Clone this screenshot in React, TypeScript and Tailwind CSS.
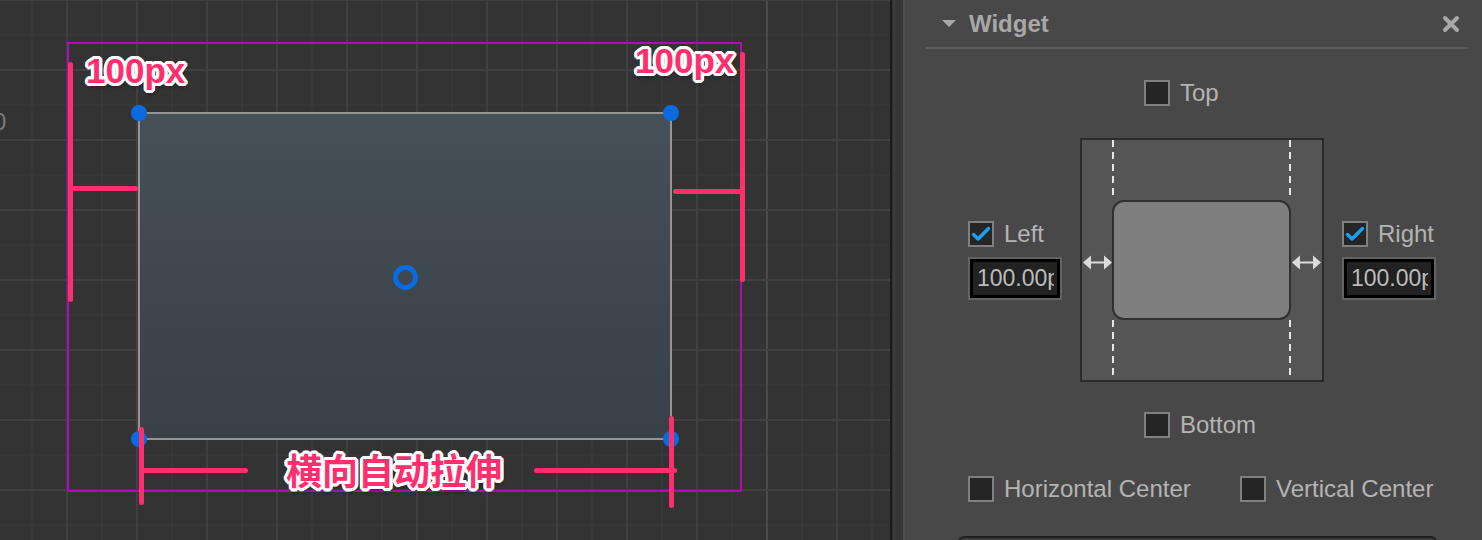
import React from 'react';

const OUTLINE =
  '[text-shadow:3px_0_0_#fff,-3px_0_0_#fff,0_3px_0_#fff,0_-3px_0_#fff,2px_2px_0_#fff,-2px_2px_0_#fff,2px_-2px_0_#fff,-2px_-2px_0_#fff,3px_1px_0_#fff,-3px_1px_0_#fff,3px_-1px_0_#fff,-3px_-1px_0_#fff,1px_3px_0_#fff,-1px_3px_0_#fff,1px_-3px_0_#fff,-1px_-3px_0_#fff,1px_4px_5px_rgba(0,0,0,0.45)]';

function Grid() {
  const majorX = Array.from({ length: 13 }, (_, i) => -3 + 70 * i);
  const minorX = Array.from({ length: 13 }, (_, i) => 32 + 70 * i);
  const majorY = Array.from({ length: 8 }, (_, i) => 70 * i);
  const minorY = Array.from({ length: 8 }, (_, i) => 35 + 70 * i);
  return (
    <svg className="absolute inset-0" width="890" height="540">
      {minorX.map((x) => (
        <line key={'mx' + x} x1={x} y1="0" x2={x} y2="540" stroke="#373737" strokeWidth="2" />
      ))}
      {minorY.map((y) => (
        <line key={'my' + y} x1="0" y1={y} x2="890" y2={y} stroke="#373737" strokeWidth="2" />
      ))}
      {majorX.map((x) => (
        <line key={'Mx' + x} x1={x} y1="0" x2={x} y2="540" stroke={x === 767 ? '#4a4a4a' : '#404040'} strokeWidth="2" />
      ))}
      {majorY.map((y) => (
        <line key={'My' + y} x1="0" y1={y} x2="890" y2={y} stroke="#404040" strokeWidth="2" />
      ))}
    </svg>
  );
}

function Canvas() {
  return (
    <div className="relative w-[890px] h-full shrink-0 overflow-hidden bg-[#333333]">
      <Grid />
      <div className="absolute left-[-7px] top-[110px] text-[24px] leading-none text-[#7a7a7a]">0</div>

      {/* parent bounds */}
      <div className="absolute left-[67px] top-[42px] w-[675px] h-[450px] border-2 border-[#aa10aa]" />

      {/* node */}
      <div className="absolute left-[138px] top-[112px] w-[534px] h-[328px] border-2 border-[#959595] bg-gradient-to-b from-[#465057] to-[#394047]" />
      <div className="absolute left-[131px] top-[105px] w-[16px] h-[16px] rounded-full bg-[#0a6be0]" />
      <div className="absolute left-[663px] top-[105px] w-[16px] h-[16px] rounded-full bg-[#0a6be0]" />
      <div className="absolute left-[131px] top-[431px] w-[16px] h-[16px] rounded-full bg-[#0a6be0]" />
      <div className="absolute left-[663px] top-[431px] w-[16px] h-[16px] rounded-full bg-[#0a6be0]" />
      <div className="absolute left-[393px] top-[265px] w-[25px] h-[25px] rounded-full border-[5px] border-[#0a6be0]" />

      {/* annotations */}
      <div className="absolute left-[68px] top-[62px] w-[5px] h-[240px] rounded-full bg-[#ff2f6e]" />
      <div className="absolute left-[68px] top-[186px] w-[70px] h-[5px] rounded-full bg-[#ff2f6e]" />
      <div className="absolute left-[740px] top-[52px] w-[5px] h-[230px] rounded-full bg-[#ff2f6e]" />
      <div className="absolute left-[673px] top-[189px] w-[72px] h-[5px] rounded-full bg-[#ff2f6e]" />
      <div className="absolute left-[139px] top-[427px] w-[5px] h-[78px] rounded-full bg-[#ff2f6e]" />
      <div className="absolute left-[139px] top-[468px] w-[109px] h-[5px] rounded-full bg-[#ff2f6e]" />
      <div className="absolute left-[669px] top-[416px] w-[5px] h-[92px] rounded-full bg-[#ff2f6e]" />
      <div className="absolute left-[534px] top-[468px] w-[143px] h-[5px] rounded-full bg-[#ff2f6e]" />

      <div className={`absolute left-[86px] top-[53px] text-[35px] font-bold leading-none text-[#ff2f6e] ${OUTLINE}`}>100px</div>
      <div className={`absolute left-[635px] top-[43px] text-[35px] font-bold leading-none text-[#ff2f6e] ${OUTLINE}`}>100px</div>
      <div className={`absolute left-[286px] top-[451px] text-[36px] font-bold leading-none text-[#ff2f6e] font-['Noto_Sans_CJK_SC',sans-serif] ${OUTLINE}`}>
        横向自动拉伸
      </div>
    </div>
  );
}

function Check({ checked }: { checked?: boolean }) {
  return (
    <div className="w-[26px] h-[26px] shrink-0 border-2 border-[#808080] bg-[#252525] flex items-center justify-center">
      {checked && (
        <svg width="22" height="22" viewBox="0 0 22 22">
          <path d="M3.5 11.5 L8 16 L18.5 5.5" fill="none" stroke="#1ea0f0" strokeWidth="3.5" strokeLinecap="round" strokeLinejoin="round" />
        </svg>
      )}
    </div>
  );
}

function CheckRow({ label, checked }: { label: string; checked?: boolean }) {
  return (
    <div className="flex items-center gap-[10px]">
      <Check checked={checked} />
      <span className="text-[24px] leading-[26px] text-[#b4b4b4] whitespace-nowrap">{label}</span>
    </div>
  );
}

function NumInput() {
  return (
    <div className="w-[94px] h-[43px] border-2 border-[#636363]">
      <div className="h-full border-[3px] border-black bg-[#222222] flex items-center pl-[4px]">
        <span className="block w-[77px] overflow-hidden whitespace-nowrap text-[23px] leading-none text-[#bcbcbc]">100.00px</span>
      </div>
    </div>
  );
}

function Arrow() {
  return (
    <svg width="29" height="15" viewBox="0 0 29 15">
      <line x1="6" y1="7.5" x2="23" y2="7.5" stroke="#dcdcdc" strokeWidth="2" />
      <polygon points="0,7.5 8,0.5 8,14.5" fill="#dcdcdc" />
      <polygon points="29,7.5 21,0.5 21,14.5" fill="#dcdcdc" />
    </svg>
  );
}

function Dashes() {
  return (
    <svg className="block w-full flex-1" width="179" height="60">
      <line x1="1" y1="0" x2="1" y2="60" stroke="#e6e6e6" strokeWidth="2" strokeDasharray="7 5" />
      <line x1="178" y1="0" x2="178" y2="60" stroke="#e6e6e6" strokeWidth="2" strokeDasharray="7 5" />
    </svg>
  );
}

function Diagram() {
  return (
    <div className="w-[244px] h-[244px] shrink-0 border-2 border-[#2a2a2a] bg-[#555555] flex">
      <div className="w-[30px] flex items-center justify-center pt-[4px]">
        <Arrow />
      </div>
      <div className="w-[179px] flex flex-col">
        <Dashes />
        <div className="h-[120px] rounded-[12px] border-2 border-[#303030] bg-[#7f7f7f]" />
        <Dashes />
      </div>
      <div className="w-[31px] flex items-center justify-center pt-[4px]">
        <Arrow />
      </div>
    </div>
  );
}

function Panel() {
  return (
    <div className="flex-1 h-full bg-[#484848] flex flex-col overflow-hidden">
      <div className="ml-[21px] mr-[14px] h-[49px] shrink-0 border-b-2 border-[#5d5d5d] flex items-center pl-[16px] pr-[8px]">
        <svg width="14" height="8" viewBox="0 0 14 8">
          <polygon points="0,0 14,0 7,7" fill="#a8a8a8" />
        </svg>
        <span className="ml-[13px] text-[24px] font-bold text-[#a8a8a8] leading-none">Widget</span>
        <svg className="ml-auto" width="18" height="18" viewBox="0 0 18 18">
          <path d="M3 3 L15 15 M15 3 L3 15" stroke="#a8a8a8" strokeWidth="4" strokeLinecap="round" />
        </svg>
      </div>

      <div className="pl-[63px] flex flex-col">
        <div className="mt-[31px] ml-[176px]">
          <CheckRow label="Top" />
        </div>

        <div className="mt-[32px] flex items-center">
          <div className="w-[94px] flex flex-col gap-[10px]">
            <CheckRow label="Left" checked />
            <NumInput />
          </div>
          <div className="ml-[18px]">
            <Diagram />
          </div>
          <div className="ml-[18px] w-[94px] flex flex-col gap-[10px]">
            <CheckRow label="Right" checked />
            <NumInput />
          </div>
        </div>

        <div className="mt-[30px] ml-[176px]">
          <CheckRow label="Bottom" />
        </div>

        <div className="mt-[38px] flex items-center">
          <div className="w-[272px]">
            <CheckRow label="Horizontal Center" />
          </div>
          <CheckRow label="Vertical Center" />
        </div>

        <div className="mt-[34px] -ml-[10px] w-[479px] h-[20px] rounded-t-[6px] border-2 border-[#1e1e1e] bg-[#3c3c3c]" />
      </div>
    </div>
  );
}

export default function App() {
  return (
    <div className="w-[1482px] h-[540px] flex overflow-hidden font-['Liberation_Sans','Noto_Sans_CJK_SC',sans-serif]">
      <Canvas />
      <div className="w-[2px] h-full bg-[#1c1c1c]" />
      <div className="w-[1px] h-full bg-[#2c2c2c]" />
      <div className="w-[2px] h-full bg-[#3d3d3d]" />
      <div className="w-[8px] h-full bg-[#353535]" />
      <div className="w-[2px] h-full bg-[#4f4f4f]" />
      <Panel />
    </div>
  );
}
